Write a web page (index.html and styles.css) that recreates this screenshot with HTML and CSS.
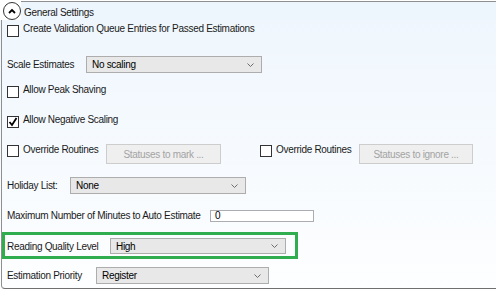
FILE: index.html
```html
<!DOCTYPE html>
<html lang="en">
<head>
    <meta charset="UTF-8">
    <meta name="viewport" content="width=device-width, initial-scale=1.0">
    <title>General Settings</title>
    <link rel="stylesheet" href="styles.css">
</head>
<body>

<div class="group">
    <div class="group-head">
        <span class="toggle">
            <svg width="8" height="6" viewBox="0 0 8 6"><path d="M1 5 L4 2 L7 5" fill="none" stroke="#000" stroke-width="1.8"/></svg>
        </span>
        <span class="title">General Settings</span>
    </div>

    <div class="group-body">
        <div class="row row-create">
            <span class="check"></span>
            <span class="text">Create Validation Queue Entries for Passed Estimations</span>
        </div>

        <div class="row row-field row-scale">
            <span class="label label-scale">Scale Estimates</span>
            <div class="select select-scale">
                <span>No scaling</span>
                <svg class="arrow" width="7" height="4" viewBox="0 0 7 4"><path d="M0.5 0.5 L3.5 3.5 L6.5 0.5" fill="none" stroke="#6d6d6d" stroke-width="1"/></svg>
            </div>
        </div>

        <div class="row row-peak">
            <span class="check"></span>
            <span class="text">Allow Peak Shaving</span>
        </div>

        <div class="row row-negative">
            <span class="check">
                <svg width="10" height="10" viewBox="0 0 10 10"><path d="M1.5 5 L4 8 L8.5 1" fill="none" stroke="#000" stroke-width="1.8"/></svg>
            </span>
            <span class="text">Allow Negative Scaling</span>
        </div>

        <div class="row row-override">
            <span class="check"></span>
            <span class="text override-text">Override Routines</span>
            <button type="button" class="btn-status btn-mark">Statuses to mark ...</button>
            <span class="check"></span>
            <span class="text override-text">Override Routines</span>
            <button type="button" class="btn-status btn-ignore">Statuses to ignore ...</button>
        </div>

        <div class="row row-field row-holiday">
            <span class="label label-holiday">Holiday List:</span>
            <div class="select select-holiday">
                <span>None</span>
                <svg class="arrow" width="7" height="4" viewBox="0 0 7 4"><path d="M0.5 0.5 L3.5 3.5 L6.5 0.5" fill="none" stroke="#6d6d6d" stroke-width="1"/></svg>
            </div>
        </div>

        <div class="row row-field row-minutes">
            <span class="label label-minutes">Maximum Number of Minutes to Auto Estimate</span>
            <div class="textbox">0</div>
        </div>

        <div class="highlight">
            <div class="row row-field">
                <span class="label label-quality">Reading Quality Level</span>
                <div class="select select-quality">
                    <span>High</span>
                    <svg class="arrow" width="7" height="4" viewBox="0 0 7 4"><path d="M0.5 0.5 L3.5 3.5 L6.5 0.5" fill="none" stroke="#6d6d6d" stroke-width="1"/></svg>
                </div>
            </div>
        </div>

        <div class="row row-field row-priority">
            <span class="label label-priority">Estimation Priority</span>
            <div class="select select-priority">
                <span>Register</span>
                <svg class="arrow" width="7" height="4" viewBox="0 0 7 4"><path d="M0.5 0.5 L3.5 3.5 L6.5 0.5" fill="none" stroke="#6d6d6d" stroke-width="1"/></svg>
            </div>
        </div>
    </div>
</div>

</body>
</html>
```

FILE: styles.css
```css
body {
    margin: 0;
    background-color: #fff;
    font-family: "Liberation Sans", Arial, sans-serif;
    font-size: 10px;
    letter-spacing: -0.3px;
    line-height: 13px;
    color: #1a1a1a;
    white-space: nowrap;
}
.group {
    width: 496px;
    background: linear-gradient(#eef6fd, #fdfeff);
}
.group-head {
    display: flex;
    height: 19px;
    margin-top: 1px;
    background-color: #fff;
}
.toggle {
    width: 16px;
    height: 16px;
    margin: 1px 0 0 3px;
    border: 1px solid #333;
    border-radius: 50%;
    background-color: #fff;
    display: flex;
    align-items: center;
    justify-content: center;
}
.toggle svg {
    margin-top: -1px;
}
.title {
    flex: 1;
    border-top: 1px solid #8f8f8f;
    padding: 4px 0 0 3px;
    background-color: #eef6fd;
}
.group-body {
    margin-left: 1px;
    padding: 2px 0 4px 5px;
    border-left: 1px solid #8f8f8f;
    border-bottom: 1px solid #6f6f6f;
    border-bottom-left-radius: 4px;
}
.row {
    display: flex;
    align-items: flex-start;
}
.row-field {
    align-items: center;
}
.check {
    width: 10px;
    height: 10px;
    margin-top: 3px;
    margin-right: 4px;
    border: 1px solid #333;
    background-color: #fff;
    display: flex;
    align-items: center;
    justify-content: center;
    flex-shrink: 0;
}
.row-create {
    height: 16px;
}
.row-scale {
    margin-top: 18px;
}
.row-peak {
    margin-top: 10px;
}
.row-negative {
    margin-top: 15px;
}
.row-override {
    margin-top: 15px;
}
.row-override .check {
    margin-top: 2px;
}
.override-text {
    width: 83px;
}
.btn-status {
    height: 20px;
    margin-top: 1px;
    padding: 0;
    border: 1px solid #cdcdcd;
    background-color: #efefef;
    color: #a3a3a3;
    font-family: inherit;
    font-size: 10px;
    letter-spacing: -0.3px;
}
.btn-mark {
    width: 115px;
    margin-right: 39px;
}
.btn-ignore {
    width: 114px;
}
.label {
    flex-shrink: 0;
}
.label-scale {
    width: 79px;
}
.label-holiday {
    width: 63px;
}
.label-minutes {
    width: 203px;
}
.label-quality {
    width: 103px;
}
.label-priority {
    width: 89px;
}
.select {
    height: 15px;
    border: 1px solid #adadad;
    background-color: #e8e8e8;
    padding-left: 5px;
    display: flex;
    align-items: center;
    justify-content: space-between;
    color: #000;
}
.select .arrow {
    margin-right: 7px;
}
.select-scale {
    width: 169px;
}
.select-holiday {
    width: 169px;
}
.select-quality {
    width: 169px;
    height: 14px;
}
.select-priority {
    width: 166px;
}
.row-holiday {
    margin-top: 13px;
}
.row-minutes {
    margin-top: 15px;
    height: 13px;
}
.textbox {
    width: 98px;
    height: 10px;
    line-height: 10px;
    padding-left: 4px;
    border: 1px solid #abadb3;
    background-color: #fff;
    color: #000;
}
.highlight {
    margin: 10px 0 0 -5px;
    width: 288px;
    padding: 3px 0 2px 2px;
    border: 3px solid #30ad4f;
}
.row-priority {
    margin-top: 8px;
}
```
